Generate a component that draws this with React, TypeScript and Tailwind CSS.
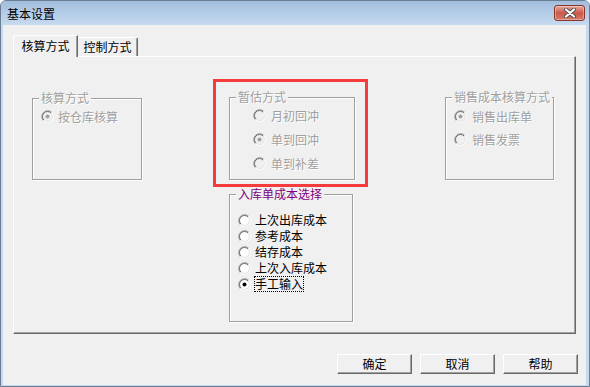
import React from 'react';

// classic 3D radio button (sunken ring)
function Radio({ checked, disabled }: { checked?: boolean; disabled?: boolean }) {
  return (
    <svg width="13" height="13" viewBox="0 0 13 13" className="shrink-0">
      <circle cx="6.5" cy="6.5" r="4.5" fill={disabled ? '#f0f0f0' : '#ffffff'} />
      <path d="M2.26 10.74A6 6 0 0 1 10.74 2.26" stroke="#a0a0a0" fill="none" />
      <path d="M10.74 2.26A6 6 0 0 1 2.26 10.74" stroke="#ffffff" fill="none" />
      <path d="M2.96 10.04A5 5 0 0 1 10.04 2.96" stroke="#696969" fill="none" />
      <path d="M10.04 2.96A5 5 0 0 1 2.96 10.04" stroke="#e3e3e3" fill="none" />
      {checked && <circle cx="6.5" cy="6.5" r="2" fill={disabled ? '#a0a0a0' : '#000000'} />}
    </svg>
  );
}

function GroupBox({
  title,
  titleClass,
  className,
  children,
}: {
  title: string;
  titleClass: string;
  className: string;
  children: React.ReactNode;
}) {
  return (
    <div className={`relative shrink-0 border border-[#a0a0a0] shadow-[1px_1px_0_#ffffff,inset_1px_1px_0_#ffffff] ${className}`}>
      <span className={`absolute left-[6px] top-[-7px] bg-[#f0f0f0] px-[2px] leading-[12px] whitespace-nowrap ${titleClass}`}>
        {title}
      </span>
      {children}
    </div>
  );
}

const dim = 'text-[#a0a0a0] [text-shadow:1px_1px_0_#ffffff]';

function Button({ label }: { label: string }) {
  return (
    <div className="flex h-[20px] w-[75px] items-center justify-center border border-t-white border-l-white border-r-[#696969] border-b-[#696969] bg-[#f0f0f0] leading-[12px] shadow-[inset_-1px_-1px_0_#a0a0a0]">
      {label}
    </div>
  );
}

export default function App() {
  const inbound = ['上次出库成本', '参考成本', '结存成本', '上次入库成本'];

  return (
    <div className="box-border flex h-[387px] w-[590px] flex-col overflow-hidden rounded-t-[6px] border border-[#6a7d93] bg-[#c6daef] pb-[1px] pl-[2px] pr-[3px] font-['Noto_Sans_CJK_SC','Noto_Sans',sans-serif] text-[12px] text-black">
      {/* title bar */}
      <div className="-ml-[2px] -mr-[3px] flex h-[24px] shrink-0 items-start bg-gradient-to-b from-[#a2bedd] to-[#c6daf0]">
        <span className="ml-[6px] mt-[7px] leading-[12px]">基本设置</span>
        <div className="ml-auto mr-[4px] mt-[4px] flex h-[16px] w-[31px] items-center justify-center rounded-[3px] border border-[#8a3428] bg-gradient-to-b from-[#e5aaa0] via-[#c9584a] to-[#d57a6c] shadow-[inset_0_0_0_1px_rgba(255,255,255,0.35)]">
          <svg width="14" height="10" viewBox="0 0 14 10">
            <path d="M3 1.5L11 8.5M11 1.5L3 8.5" stroke="#4b4b4b" strokeWidth="4" strokeLinecap="round" />
            <path d="M3 1.5L11 8.5M11 1.5L3 8.5" stroke="#ffffff" strokeWidth="2.2" strokeLinecap="round" />
          </svg>
        </div>
      </div>

      {/* client area */}
      <div className="flex flex-1 flex-col bg-[#f0f0f0] pl-[10px] pt-[10px]">
        {/* tabs */}
        <div className="relative z-10 flex h-[21px] items-end">
          <div className="mb-[-1px] flex h-[22px] w-[65px] justify-center rounded-tl-[2px] border-l border-t border-r border-l-white border-t-white border-r-[#696969] bg-[#f0f0f0] pt-[4px] leading-[12px] shadow-[inset_-1px_0_0_#a0a0a0]">
            核算方式
          </div>
          <div className="flex h-[19px] w-[60px] justify-center rounded-tr-[2px] border-t border-r border-t-white border-r-[#696969] pt-[3px] leading-[12px] shadow-[inset_-1px_0_0_#a0a0a0]">
            控制方式
          </div>
        </div>

        {/* tab page */}
        <div className="flex h-[278px] w-[563px] items-start border border-t-white border-l-white border-r-[#696969] border-b-[#696969] shadow-[inset_-1px_-1px_0_#a0a0a0]">
          <GroupBox title="核算方式" titleClass={dim} className="ml-[18px] mt-[41px] h-[82px] w-[110px] pl-[8px] pt-[11px]">
            <div className="flex h-[13px] items-center gap-[4px]">
              <Radio checked disabled />
              <span className={`leading-[12px] ${dim}`}>按仓库核算</span>
            </div>
          </GroupBox>

          <div className="ml-[71px] mt-[22px] flex shrink-0 flex-col">
            <div className="h-[108px] w-[155px] border-[3px] border-[#f53c3c]">
              <GroupBox title="暂估方式" titleClass={dim} className="ml-[13px] mt-[15px] flex h-[83px] w-[126px] flex-col gap-[11px] pl-[23px] pt-[11px]">
                {['月初回冲', '单到回冲', '单到补差'].map((t, i) => (
                  <div key={t} className="flex h-[13px] items-center gap-[5px]">
                    <Radio checked={i === 1} disabled />
                    <span className={`leading-[12px] ${dim}`}>{t}</span>
                  </div>
                ))}
              </GroupBox>
            </div>

            <GroupBox title="入库单成本选择" titleClass="text-[#800080]" className="ml-[16px] mt-[7px] h-[128px] w-[124px] pl-[8px] pt-[17px]">
              {inbound.map((t) => (
                <div key={t} className="flex h-[16px] items-center gap-[4px]">
                  <Radio />
                  <span className="leading-[12px]">{t}</span>
                </div>
              ))}
              <div className="flex h-[16px] items-center gap-[4px]">
                <Radio checked />
                <span className="-ml-[1px] flex h-[16px] items-center border border-dotted border-black leading-[12px]">手工输入</span>
              </div>
            </GroupBox>
          </div>

          <GroupBox title="销售成本核算方式" titleClass={dim} className="ml-[77px] mt-[40px] flex h-[83px] w-[109px] flex-col gap-[10px] pl-[8px] pt-[12px]">
            <div className="flex h-[13px] items-center gap-[5px]">
              <Radio checked disabled />
              <span className={`leading-[12px] ${dim}`}>销售出库单</span>
            </div>
            <div className="flex h-[13px] items-center gap-[5px]">
              <Radio disabled />
              <span className={`leading-[12px] ${dim}`}>销售发票</span>
            </div>
          </GroupBox>
        </div>

        {/* buttons */}
        <div className="mt-[20px] flex justify-end gap-[8px] pr-[8px]">
          <Button label="确定" />
          <Button label="取消" />
          <Button label="帮助" />
        </div>
      </div>
    </div>
  );
}
